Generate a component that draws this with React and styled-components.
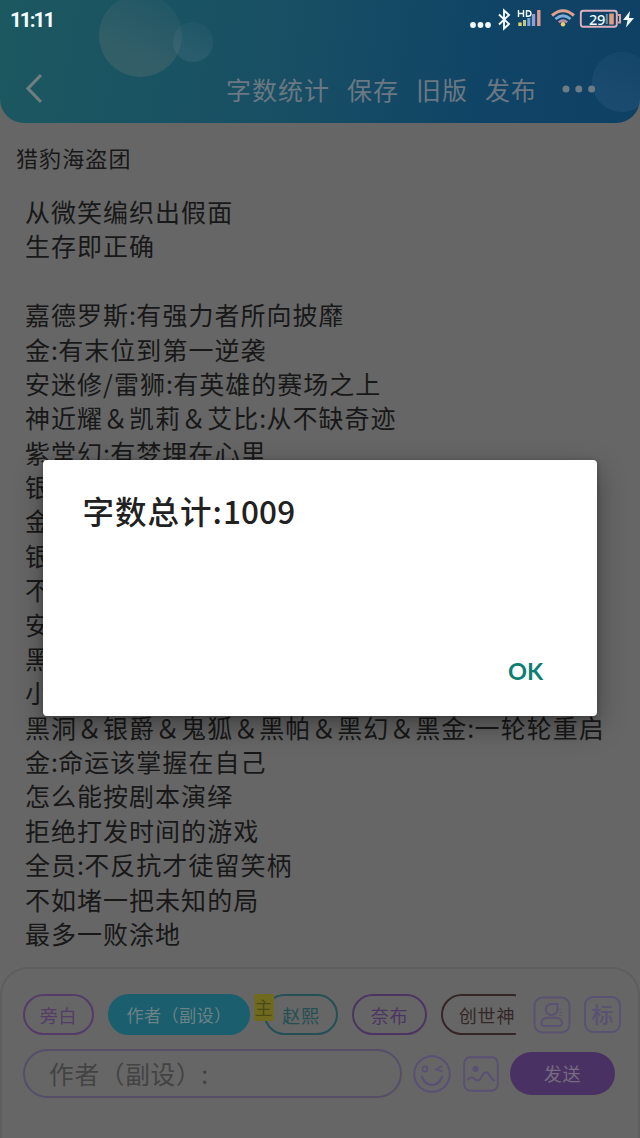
import React from "react";
import styled, { createGlobalStyle } from "styled-components";

const GlobalStyle = createGlobalStyle`
  * {
    box-sizing: border-box;
  }
  body {
    margin: 0;
    background: #666666;
    font-family: "Noto Sans CJK SC", sans-serif;
  }
`;

const lines = [
  "从微笑编织出假面",
  "生存即正确",
  "",
  "嘉德罗斯:有强力者所向披靡",
  "金:有末位到第一逆袭",
  "安迷修/雷狮:有英雄的赛场之上",
  "神近耀＆凯莉＆艾比:从不缺奇迹",
  "紫堂幻:有梦埋在心里",
  "银",
  "金",
  "银",
  "不",
  "安",
  "黑",
  "小",
  "黑洞＆银爵＆鬼狐＆黑帕＆黑幻＆黑金:一轮轮重启",
  "金:命运该掌握在自己",
  "怎么能按剧本演绎",
  "拒绝打发时间的游戏",
  "全员:不反抗才徒留笑柄",
  "不如堵一把未知的局",
  "最多一败涂地",
];

const StatusIcons = () => (
  <svg width="170" height="28" viewBox="470 6 170 28" fill="none">
    <g fill="#f2fbff">
      <circle cx="473" cy="25" r="2.9" />
      <circle cx="480.500" cy="25" r="2.9" />
      <circle cx="488" cy="25" r="2.9" />
    </g>
    <path d="M499 14.500 L509 24 L504 28.500 V10.500 L509 15 L499 24.500" stroke="#f2fbff" strokeWidth="1.9" />
    <path d="M518.500 10 V17 M523.500 10 V17 M518.500 13.500 H523.500 M526.500 10.700 V16.300 H528 Q531 16.300 531 13.500 Q531 10.700 528 10.700 Z" stroke="#f2fbff" strokeWidth="1.400" />
    <path d="M520 22.500 V26" stroke="#e3cf6e" strokeWidth="3.400" />
    <path d="M524.500 20 V26" stroke="#b9c98c" strokeWidth="3" />
    <path d="M528.800 18 V26" stroke="#7ea3d8" strokeWidth="3" />
    <path d="M533.500 14 V26" stroke="#8f9fcf" strokeWidth="3.400" />
    <path d="M538.800 10 V26" stroke="#dc9c93" strokeWidth="3.400" />
    <path d="M552 15.500 Q563 6 574 15.500" stroke="#dda18e" strokeWidth="3" />
    <path d="M555.500 19 Q563 12.500 570.500 19" stroke="#7faede" strokeWidth="2.800" />
    <path d="M558.800 22.300 Q563 18.500 567.200 22.300" stroke="#b98fa8" strokeWidth="2.400" />
    <circle cx="563" cy="24.300" r="2.200" fill="#ecd271" />
    <rect x="580.800" y="10.800" width="36" height="16" rx="2.500" stroke="#dfb0bd" strokeWidth="1.900" />
    <path d="M618 15 H620 V22.500 H618" stroke="#dfa0a4" strokeWidth="2" />
    <path d="M606.800 14 V24" stroke="#5b93ab" strokeWidth="2" />
    <path d="M611.500 13.500 V24.500" stroke="#e29a80" strokeWidth="4.600" />
    <path d="M630 11 L623 20 H627.500 L626 27.500 L634 18 H629 Z" fill="#f2fbff" />
  </svg>
);

const BackIcon = () => (
  <svg width="20" height="32" viewBox="0 0 20 32" fill="none">
    <path d="M16 2 L3 15.500 L16 29" stroke="#717d80" strokeWidth="3.200" />
  </svg>
);

const MoreIcon = () => (
  <svg width="34" height="8" viewBox="0 0 34 8" fill="#6c7b86">
    <circle cx="4" cy="4" r="3.500" />
    <circle cx="16.800" cy="4" r="3.500" />
    <circle cx="29.600" cy="4" r="3.500" />
  </svg>
);

const RoleIcon = () => (
  <svg width="38" height="38" viewBox="0 0 38 38" fill="none" stroke="#5a5173" strokeWidth="2">
    <rect x="1.500" y="1.500" width="35" height="35" rx="8" />
    <path d="M24.500 8 H18.500 Q12.800 8.500 12.800 13.500 Q13 19 18.500 19 Q24.500 18.500 24.500 12.500 Z" />
    <path d="M14 21.800 H23.500 Q29 22.500 29 27 Q29 30 25.500 30 H12 Q8.500 30 8.500 27 Q8.500 22.500 14 21.800 Z" />
    <path d="M26.500 13.500 H28.500 M26.500 16.500 H29.500 M26.500 19.500 H28.500" strokeWidth="1.200" />
  </svg>
);

const SmileIcon = () => (
  <svg width="38" height="38" viewBox="0 0 38 38" fill="none" stroke="#5a4f74" strokeWidth="2">
    <circle cx="19" cy="19" r="17.800" />
    <circle cx="12" cy="14" r="2.600" strokeWidth="1.600" />
    <path d="M29 11 L23 14.500 L29.500 16.500" strokeWidth="1.500" />
    <path d="M8.500 21 Q12 30 19 30 Q26 30 29.500 21" strokeWidth="2.200" />
  </svg>
);

const PictureIcon = () => (
  <svg width="36" height="36" viewBox="0 0 36 36" fill="none" stroke="#5a4f74" strokeWidth="1.900">
    <rect x="1.200" y="1.200" width="33.500" height="33.500" rx="6" />
    <circle cx="12.500" cy="13" r="3" fill="#5a4f74" stroke="none" />
    <path d="M4.500 24 Q8 20 11 22.500 Q15 26.500 18 22 Q21.500 14 25 17 Q27.500 21.500 31.500 25" strokeWidth="2" />
  </svg>
);

const App = () => {
  return (
    <Screen>
      <GlobalStyle />
      <Header>
        <Bubble $x={99} $y={-6} $size={83} $tone="rgba(120, 125, 120, 0.26)" />
        <Bubble $x={173} $y={22} $size={40} $tone="rgba(90, 125, 140, 0.24)" />
        <Bubble $x={592} $y={52} $size={60} $tone="rgba(70, 110, 150, 0.22)" />
        <StatusBar>
          <Clock>11:11</Clock>
          <Battery>
            <StatusIcons />
            <BatteryText>29</BatteryText>
          </Battery>
        </StatusBar>
        <NavBar>
          <BackIcon />
          <Menu>
            <span>字数统计</span>
            <span>保存</span>
            <span>旧版</span>
            <span>发布</span>
          </Menu>
          <MoreIcon />
        </NavBar>
      </Header>
      <Content>
        <Title>猎豹海盗团</Title>
        {lines.map((line, i) => (
          <Line key={i}>
            {line.split(":").map((part, n) => (
              <React.Fragment key={n}>
                {n > 0 && <Colon>:</Colon>}
                {part}
              </React.Fragment>
            ))}
          </Line>
        ))}
      </Content>
      <Panel>
        <Row>
          <Chips>
            <Chip $w={71} $color="#543b68">旁白</Chip>
            <Chip $w={142} $color="#1b5e6d" $filled>作者（副设）</Chip>
            <Chip $w={74} $color="#244f55">
              赵熙
              <Tag>主</Tag>
            </Chip>
            <Chip $w={75} $color="#4c3462">奈布</Chip>
            <Chip $w={92} $color="#352626">创世神</Chip>
          </Chips>
          <Tools>
            <RoleIcon />
            <MarkButton>标</MarkButton>
          </Tools>
        </Row>
        <Row $top={14}>
          <Input>作者（副设）:</Input>
          <Actions>
            <SmileIcon />
            <PictureIcon />
          </Actions>
          <Send>发送</Send>
        </Row>
      </Panel>
      <Overlay>
        <Dialog>
          <DialogTitle>
            字数总计:<Count>1009</Count>
          </DialogTitle>
          <Confirm>OK</Confirm>
        </Dialog>
      </Overlay>
    </Screen>
  );
};

const Screen = styled.div`
  position: relative;
  display: flex;
  flex-direction: column;
  width: 640px;
  height: 1138px;
  overflow: hidden;
  background: #666666;
`;

const Header = styled.div`
  position: relative;
  flex: none;
  height: 123px;
  overflow: hidden;
  border-radius: 0 0 24px 24px;
  background: linear-gradient(100deg, #1c5860 0%, #184f64 45%, #104466 75%, #0e4064 100%);
`;

const Bubble = styled.div`
  position: absolute;
  left: ${(p) => p.$x}px;
  top: ${(p) => p.$y}px;
  width: ${(p) => p.$size}px;
  height: ${(p) => p.$size}px;
  border-radius: 50%;
  background: linear-gradient(200deg, rgba(60, 110, 125, 0.1), ${(p) => p.$tone} 70%);
`;

const StatusBar = styled.div`
  position: relative;
  display: flex;
  justify-content: space-between;
  height: 40px;
  padding: 6px 0 0 10px;
`;

const Clock = styled.div`
  font-family: Roboto, sans-serif;
  font-weight: 700;
  font-size: 20.5px;
  line-height: 28px;
  letter-spacing: -1.9px;
  color: #f2fbff;
`;

const Battery = styled.div`
  position: relative;
  height: 28px;
`;

const BatteryText = styled.span`
  position: absolute;
  left: 119px;
  top: 5px;
  font-family: "Noto Sans", sans-serif;
  font-weight: 500;
  font-size: 14.5px;
  line-height: 16px;
  letter-spacing: -0.2px;
  color: #f2fbff;
`;

const NavBar = styled.div`
  position: relative;
  display: flex;
  align-items: center;
  height: 97px;
  padding: 0 44px 0 25px;
`;

const Menu = styled.div`
  display: flex;
  gap: 17px;
  margin-left: auto;
  margin-right: 25px;
  font-size: 25px;
  line-height: 34px;
  letter-spacing: 1px;
  color: #6b7883;
`;

const Content = styled.div`
  flex: none;
  height: 844px;
  padding: 17px 0 0 25px;
  color: #181818;
`;

const Title = styled.div`
  margin: 0 0 20px -9px;
  font-size: 22px;
  line-height: 34px;
  letter-spacing: 1.1px;
`;

const Line = styled.div`
  height: 34.38px;
  font-size: 25px;
  line-height: 34.38px;
  letter-spacing: 1.02px;
  white-space: nowrap;
`;

const Colon = styled.span`
  letter-spacing: 0.3px;
`;

const Panel = styled.div`
  flex: 1;
  padding: 25px 17px 0 22px;
  border: 2px solid #5e5e61;
  border-bottom: 0;
  border-radius: 28px 28px 0 0;
`;

const Row = styled.div`
  display: flex;
  align-items: center;
  margin-top: ${(p) => p.$top || 0}px;
`;

const Chips = styled.div`
  display: flex;
  gap: 14px;
  width: 493px;
  margin-left: -1px;
  overflow: hidden;
`;

const Chip = styled.div`
  position: relative;
  display: flex;
  flex: none;
  align-items: center;
  justify-content: center;
  width: ${(p) => p.$w}px;
  height: 41px;
  border: 2px solid ${(p) => p.$color};
  border-radius: 21px;
  background: ${(p) => (p.$filled ? p.$color : "transparent")};
  color: ${(p) => (p.$filled ? "#6d8287" : p.$color)};
  font-size: ${(p) => (p.$filled ? 17.2 : 18)}px;
  letter-spacing: ${(p) => (p.$filled ? 0.3 : 0.8)}px;
  white-space: nowrap;
`;

const Tag = styled.span`
  position: absolute;
  left: -12px;
  top: -2px;
  width: 20px;
  height: 27px;
  background: #6f6a20;
  color: #4c4a14;
  font-size: 18px;
  line-height: 26px;
  text-align: center;
`;

const Tools = styled.div`
  display: flex;
  gap: 13px;
  margin: 1px 0 0 17px;
`;

const MarkButton = styled.div`
  width: 37px;
  height: 37px;
  border: 2px solid #5a5173;
  border-radius: 9px;
  color: #5a5173;
  font-size: 22px;
  font-weight: 500;
  line-height: 31px;
  text-align: center;
`;

const Input = styled.div`
  width: 379px;
  height: 49px;
  margin-left: -1px;
  padding-left: 24px;
  border: 2px solid #564e68;
  border-radius: 25px;
  color: #434343;
  font-size: 24.7px;
  line-height: 45px;
  letter-spacing: 0.7px;
`;

const Actions = styled.div`
  display: flex;
  align-items: center;
  gap: 12px;
  margin: 0 11px;
`;

const Send = styled.div`
  width: 105px;
  height: 43px;
  border-radius: 22px;
  background: #4a3163;
  color: #776c80;
  font-size: 18px;
  line-height: 43px;
  letter-spacing: 0.8px;
  text-align: center;
`;

const Overlay = styled.div`
  position: absolute;
  inset: 0;
  padding: 460.4px 0 0 42.6px;
`;

const Dialog = styled.div`
  display: flex;
  flex-direction: column;
  justify-content: space-between;
  width: 554.6px;
  height: 256px;
  padding: 28px 54px 29px 40px;
  border-radius: 4px;
  background: #ffffff;
  box-shadow: 0 10px 28px rgba(0, 0, 0, 0.36), 0 1px 5px rgba(0, 0, 0, 0.25);
`;

const DialogTitle = styled.div`
  color: #212121;
  font-size: 31.5px;
  font-weight: 500;
  line-height: 44px;
  letter-spacing: 1px;
`;

const Count = styled.span`
  letter-spacing: 0.1px;
`;

const Confirm = styled.div`
  align-self: flex-end;
  color: #0c7f72;
  font-family: Lato, sans-serif;
  font-size: 23.5px;
  font-weight: 700;
  line-height: 32px;
`;

export default App;
